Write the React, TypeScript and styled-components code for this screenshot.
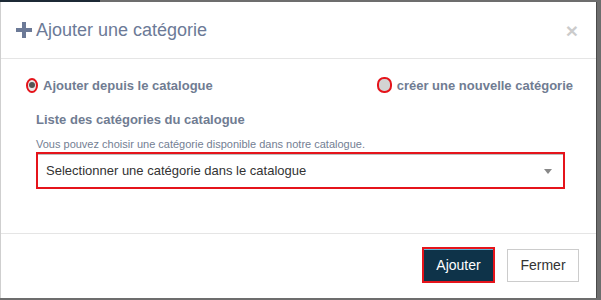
import React from 'react';
import styled, { createGlobalStyle } from 'styled-components';

const GlobalStyle = createGlobalStyle`
  html, body {
    margin: 0;
    padding: 0;
    background: #6d6d6d;
    font-family: "Liberation Sans", Arial, sans-serif;
  }
`;

const Page = styled.div`
  width: 601px;
  height: 300px;
  overflow: hidden;
`;

const Peek = styled.div`
  width: 100px;
  height: 2px;
  background: #1c2935;
`;

const Modal = styled.div`
  width: 597px;
  background: #fff;
  border-left: 1px solid #cfcfcf;
  border-right: 1px solid #4a4a4a;
  box-sizing: border-box;
`;

const Header = styled.div`
  display: flex;
  align-items: center;
  justify-content: space-between;
  padding: 15px 18px 15px 15px;
  border-bottom: 1px solid #e5e5e5;
`;

const Title = styled.h4`
  display: flex;
  align-items: center;
  gap: 4px;
  margin: 0;
  font-size: 18px;
  font-weight: normal;
  line-height: 26px;
  color: #6c7a97;
`;

const Close = styled.button`
  border: 0;
  background: none;
  padding: 0;
  font-family: "Liberation Sans", Arial, sans-serif;
  font-size: 21px;
  font-weight: bold;
  line-height: 1;
  color: #000;
  opacity: 0.2;
  cursor: pointer;
`;

const Body = styled.div`
  padding: 16px 23px 44px 25px;
`;

const RadioRow = styled.div`
  display: flex;
  justify-content: space-between;
  align-items: center;
  height: 20px;
`;

const RadioLabel = styled.label`
  display: flex;
  align-items: center;
  gap: 5px;
  font-size: 13px;
  font-weight: bold;
  color: #707c92;
`;

const Radio = styled.span<{ $checked?: boolean }>`
  box-sizing: border-box;
  display: flex;
  align-items: center;
  justify-content: center;
  width: ${(p) => (p.$checked ? '12px' : '15px')};
  height: ${(p) => (p.$checked ? '15px' : '16px')};
  border: 2px solid #e5141b;
  border-radius: ${(p) => (p.$checked ? '50%' : '7px')};
  background: ${(p) => (p.$checked ? '#e9e9e9' : '#d3d3d3')};

  &::after {
    content: "";
    display: ${(p) => (p.$checked ? 'block' : 'none')};
    width: 6px;
    height: 6px;
    border-radius: 50%;
    background: #555;
  }
`;

const FormGroup = styled.div`
  margin-top: 16px;
  padding: 0 8px 0 10px;
`;

const FieldLabel = styled.div`
  font-size: 13px;
  font-weight: bold;
  line-height: 18px;
  color: #707c92;
`;

const Help = styled.div`
  margin-top: 8px;
  font-size: 11px;
  line-height: 14px;
  color: #737e93;
`;

const Select = styled.div`
  box-sizing: border-box;
  margin-top: 1px;
  height: 37px;
  display: flex;
  align-items: center;
  justify-content: space-between;
  padding: 0 11px 0 8px;
  border: 2px solid #e5141b;
  box-shadow: inset 0 1px 0 #bdbdbd;
  font-size: 13px;
  color: #333;
`;

const Caret = styled.span`
  width: 0;
  height: 0;
  border-left: 4px solid transparent;
  border-right: 4px solid transparent;
  border-top: 5px solid #888;
  margin-top: 2px;
`;

const Footer = styled.div`
  display: flex;
  justify-content: flex-end;
  align-items: center;
  gap: 12px;
  padding: 13px 17px 15px;
  border-top: 1px solid #e5e5e5;
`;

const Button = styled.button<{ $primary?: boolean }>`
  box-sizing: border-box;
  width: ${(p) => (p.$primary ? '73px' : '72px')};
  height: ${(p) => (p.$primary ? '36px' : '33px')};
  padding: 0;
  font-family: "Liberation Sans", Arial, sans-serif;
  font-size: 14px;
  color: ${(p) => (p.$primary ? '#fff' : '#333')};
  background: ${(p) => (p.$primary ? '#0e3349' : '#fff')};
  border: ${(p) => (p.$primary ? '2px solid #e5141b' : '1px solid #cccccc')};
  box-shadow: ${(p) => (p.$primary ? 'inset 0 1px 0 #5fb4d8' : 'none')};
  cursor: pointer;
`;

const PlusIcon = () => (
  <svg width="16" height="16" viewBox="0 0 16 16">
    <path d="M6 0h4v6h6v4h-6v6H6v-6H0V6h6z" fill="#6c7a97" />
  </svg>
);

export default function App() {
  return (
    <Page>
      <GlobalStyle />
      <Peek />
      <Modal>
        <Header>
          <Title>
            <PlusIcon />
            Ajouter une catégorie
          </Title>
          <Close>×</Close>
        </Header>
        <Body>
          <RadioRow>
            <RadioLabel>
              <Radio $checked />
              Ajouter depuis le catalogue
            </RadioLabel>
            <RadioLabel>
              <Radio />
              créer une nouvelle catégorie
            </RadioLabel>
          </RadioRow>
          <FormGroup>
            <FieldLabel>Liste des catégories du catalogue</FieldLabel>
            <Help>Vous pouvez choisir une catégorie disponible dans notre catalogue.</Help>
            <Select>
              Selectionner une catégorie dans le catalogue
              <Caret />
            </Select>
          </FormGroup>
        </Body>
        <Footer>
          <Button $primary>Ajouter</Button>
          <Button>Fermer</Button>
        </Footer>
      </Modal>
    </Page>
  );
}
